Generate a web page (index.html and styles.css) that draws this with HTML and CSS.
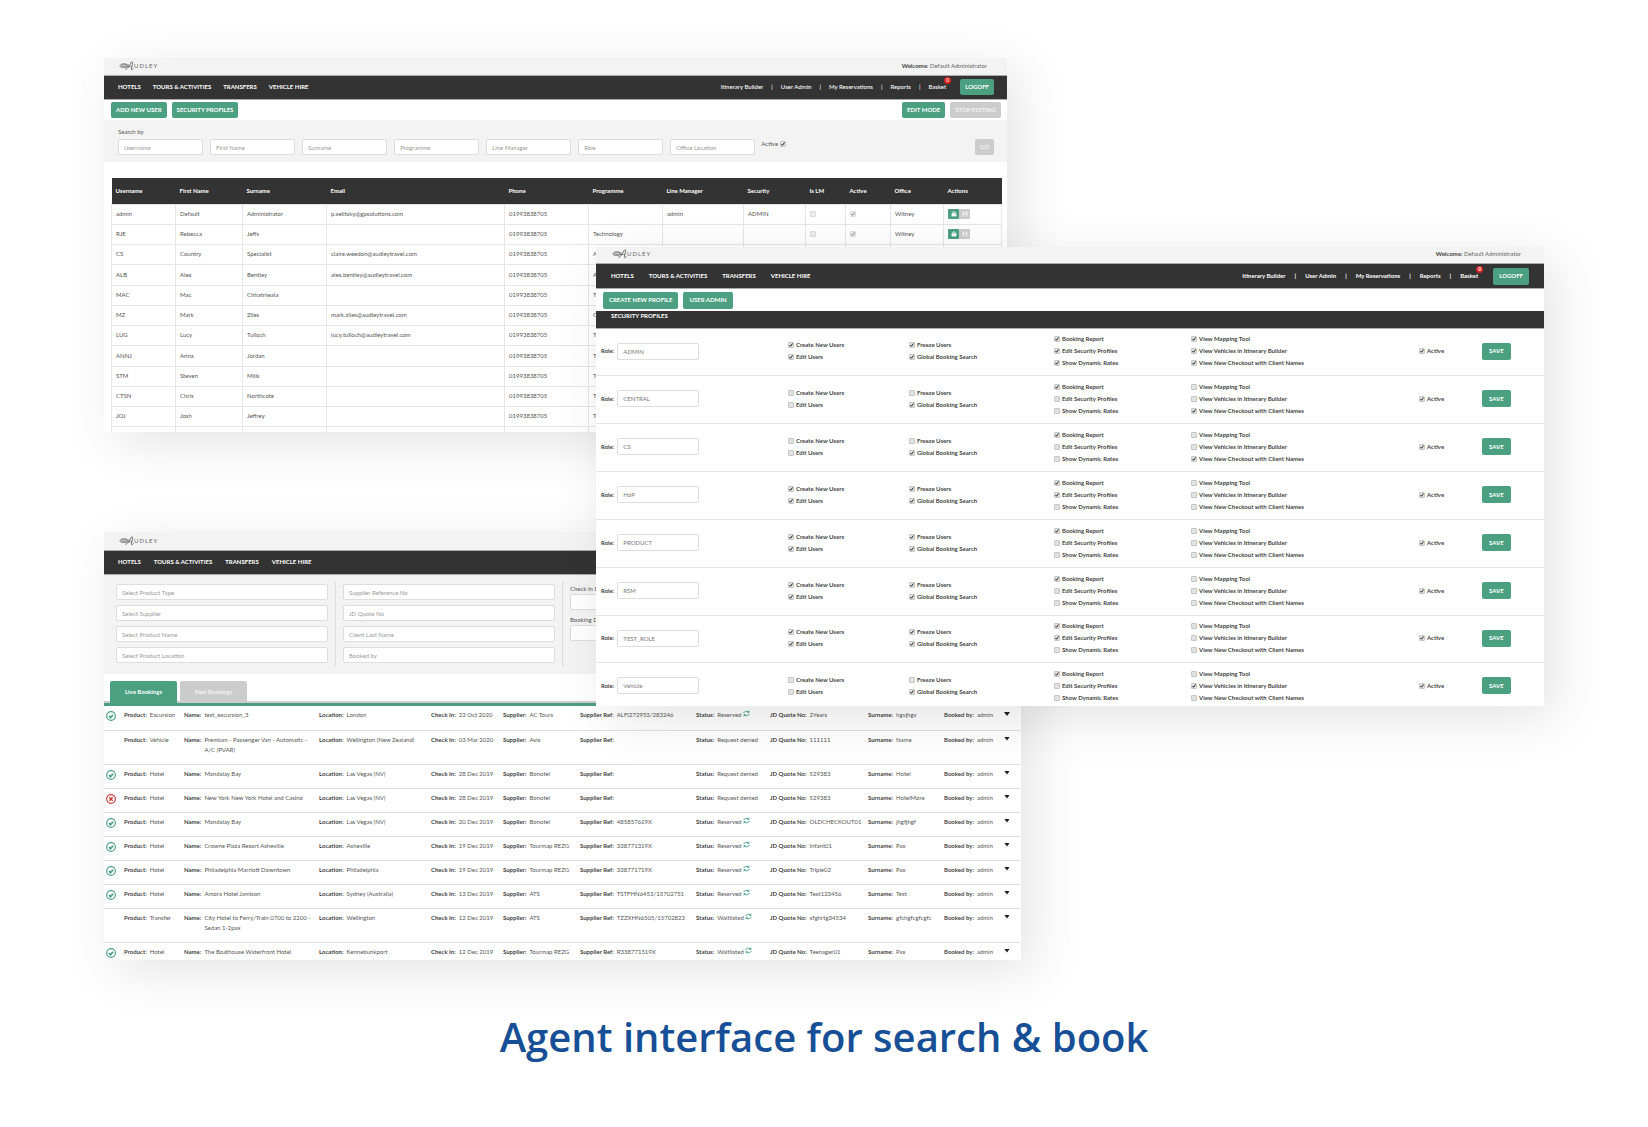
FILE: index.html
```html
<!DOCTYPE html>
<html lang="en">
<head>
<meta charset="utf-8">
<title>Agent interface for search &amp; book</title>
<link rel="stylesheet" href="styles.css">
</head>
<body>
<svg class="sprite" aria-hidden="true">
  <symbol id="swirl" viewBox="0 0 45 30"><g fill="none" stroke="#555" stroke-linecap="round"><path stroke-width="2" d="M30 15C20 21 4 22 3 15S20 6 24 11S14 18 8 15S16 10 29 12"/><path stroke-width="2.4" d="M20 25C27 24 32 14 36 5C38 1 42 2 41 6C39 13 37 20 37 25C38 28 41 26 43 23"/><path stroke-width="1.6" d="M24 17H39"/></g></symbol>
  <symbol id="ok" viewBox="0 0 30 30"><circle cx="15" cy="15" r="13" fill="none" stroke="#4aa081" stroke-width="3.5"/><path d="M9 15l4.500 5L21 11.500" fill="none" stroke="#4aa081" stroke-width="5"/></symbol>
  <symbol id="fail" viewBox="0 0 30 30"><circle cx="15" cy="15" r="13" fill="none" stroke="#d03a35" stroke-width="3.500"/><path d="M10 10l10 10M20 10L10 20" fill="none" stroke="#d03a35" stroke-width="4"/></symbol>
  <symbol id="sync" viewBox="0 0 20 20"><path d="M2 9A8 7 0 0 1 15 5M18 11A8 7 0 0 1 5 15" fill="none" stroke="#4aa081" stroke-width="2.600"/><path d="M18 1v7h-7zM2 19v-7h7z" fill="#4aa081"/></symbol>
  <symbol id="lock" viewBox="0 0 20 20"><path d="M2 8h16v10H2z" fill="#fff"/><path d="M6 9V4.500Q6 3 10 3T14 4.500V9" fill="none" stroke="#fff" stroke-width="3"/></symbol>
  <symbol id="disk" viewBox="0 0 20 20"><path d="M2 2h5v6h6V2h5v16h-4v-6H6v6H2z" fill="#f3f3f3"/></symbol>
</svg>
<main class="stage">
  <section class="window users" aria-label="User admin">
    <header class="brand">
      <a class="logo" href="#"><svg><use href="#swirl"/></svg>UDLEY</a>
      <p class="welcome"><b>Welcome:</b> Default Administrator</p>
    </header>
    <nav class="nav">
      <div class="menu"><a href="#">HOTELS</a><a href="#">TOURS &amp; ACTIVITIES</a><a href="#">TRANSFERS</a><a href="#">VEHICLE HIRE</a></div>
      <div class="account"><a href="#">Itinerary Builder</a><i>|</i><a href="#">User Admin</a><i>|</i><a href="#">My Reservations</a><i>|</i><a href="#">Reports</a><i>|</i><a class="basket" href="#">Basket<span class="badge">0</span></a><button class="btn">LOGOFF</button></div>
    </nav>
    <div class="toolbar">
      <button class="btn">ADD NEW USER</button><button class="btn">SECURITY PROFILES</button>
      <button class="btn push">EDIT MODE</button><button class="btn" disabled>STOP EDITING</button>
    </div>
    <form class="search">
      <p>Search by</p>
      <div class="search-row">
        <div class="search-fields">
          <input type="text" placeholder="Username" aria-label="Username">
          <input type="text" placeholder="First Name" aria-label="First Name">
          <input type="text" placeholder="Surname" aria-label="Surname">
          <input type="text" placeholder="Programme" aria-label="Programme">
          <input type="text" placeholder="Line Manager" aria-label="Line Manager">
          <input type="text" placeholder="Role" aria-label="Role">
          <input type="text" placeholder="Office Location" aria-label="Office Location">
        </div>
        <label class="active-filter">Active <input type="checkbox" checked></label>
        <button class="btn" disabled>GO</button>
      </div>
    </form>
    <table class="user-table">
      <colgroup><col class="w64"><col class="w67"><col class="w84"><col class="w178"><col class="w84"><col class="w74"><col class="w81"><col class="w62"><col class="w40"><col class="w45"><col class="w53"><col class="w58"></colgroup>
      <thead><tr><th>Username</th><th>First Name</th><th>Surname</th><th>Email</th><th>Phone</th><th>Programme</th><th>Line Manager</th><th>Security</th><th>Is LM</th><th>Active</th><th>Office</th><th>Actions</th></tr></thead>
      <tbody id="user-rows"></tbody>
    </table>
  </section>

  <section class="window bookings" aria-label="Bookings">
    <header class="brand">
      <a class="logo" href="#"><svg><use href="#swirl"/></svg>UDLEY</a>
    </header>
    <nav class="nav">
      <div class="menu"><a href="#">HOTELS</a><a href="#">TOURS &amp; ACTIVITIES</a><a href="#">TRANSFERS</a><a href="#">VEHICLE HIRE</a></div>
    </nav>
    <form class="filters">
      <div class="filter-group">
        <input type="text" placeholder="Select Product Type" aria-label="Product type">
        <input type="text" placeholder="Select Supplier" aria-label="Supplier">
        <input type="text" placeholder="Select Product Name" aria-label="Product name">
        <input type="text" placeholder="Select Product Location" aria-label="Product location">
      </div>
      <div class="filter-group">
        <input type="text" placeholder="Supplier Reference No" aria-label="Supplier reference">
        <input type="text" placeholder="JD Quote No" aria-label="Quote number">
        <input type="text" placeholder="Client Last Name" aria-label="Client last name">
        <input type="text" placeholder="Booked by" aria-label="Booked by">
      </div>
      <div class="filter-dates">
        <label for="checkin">Check In Date</label><input id="checkin" type="text">
        <label for="booked">Booking Date</label><input id="booked" type="text">
      </div>
    </form>
    <div class="tabs"><button class="tab current">Live Bookings</button><button class="tab">Past Bookings</button></div>
    <table class="booking-table">
      <colgroup><col class="w20"><col class="w60"><col class="w135"><col class="w112"><col class="w72"><col class="w77"><col class="w116"><col class="w74"><col class="w98"><col class="w76"><col class="w60"><col class="w18"></colgroup>
      <tbody id="booking-rows"></tbody>
    </table>
  </section>

  <section class="window profiles" aria-label="Security profiles">
    <header class="brand">
      <a class="logo" href="#"><svg><use href="#swirl"/></svg>UDLEY</a>
      <p class="welcome"><b>Welcome:</b> Default Administrator</p>
    </header>
    <nav class="nav">
      <div class="menu"><a href="#">HOTELS</a><a href="#">TOURS &amp; ACTIVITIES</a><a href="#">TRANSFERS</a><a href="#">VEHICLE HIRE</a></div>
      <div class="account"><a href="#">Itinerary Builder</a><i>|</i><a href="#">User Admin</a><i>|</i><a href="#">My Reservations</a><i>|</i><a href="#">Reports</a><i>|</i><a class="basket" href="#">Basket<span class="badge">0</span></a><button class="btn">LOGOFF</button></div>
    </nav>
    <div class="toolbar"><button class="btn">CREATE NEW PROFILE</button><button class="btn">USER ADMIN</button></div>
    <h2 class="band">SECURITY PROFILES</h2>
    <div id="profile-rows"></div>
  </section>

  <h1 class="caption">Agent interface for search &amp; book</h1>
</main>
<script src="app.js"></script>
</body>
</html>
```
FILE: styles.css
```css
* { box-sizing: border-box; }
body { margin: 0; background: #fff; color: #555; font: 6px/10px Lato, "Liberation Sans", sans-serif; }
p, h1, h2 { margin: 0; }
a { color: inherit; text-decoration: none; }
b { color: #444; }
.sprite { display: none; }
input, button { font: inherit; margin: 0; }

.stage {
  display: grid;
  grid-template-columns: 104fr 492fr 411fr 14fr 523fr 104fr;
  grid-template-rows: 58px 189px 185px 100px 174px 254px 167px;
}
.window { isolation: isolate; background: #fff; min-width: 0; min-height: 0; overflow: hidden; box-shadow: 12px 12px 50px rgba(0, 0, 0, 0.11); }
.users { grid-column: 2 / 4; grid-row: 2 / 4; }
.bookings { grid-column: 2 / 5; grid-row: 5 / 7; }
.profiles { grid-column: 3 / 6; grid-row: 3 / 6; z-index: 1; }

.brand { display: flex; justify-content: space-between; align-items: center; height: 17px; padding: 0 20px 1px 15px; background: #f3f3f3; }
.bookings .brand { height: 18px; }
.profiles .brand { height: 16px; padding: 0 23px 3px 16px; }
.logo { display: flex; align-items: center; color: #666; letter-spacing: 1px; }
.logo svg { width: 15px; height: 10px; }
.welcome { color: #666; }

.nav { display: flex; justify-content: space-between; align-items: center; height: 25px; padding: 0 13px 1px 14px; background: #333; border-top: 1px solid #aaa; border-bottom: 1px solid #aaa; color: #fff; font-weight: 700; }
.profiles .nav { height: 26px; padding: 0 15px; }
.menu { display: flex; gap: 12px; }
.bookings .menu { gap: 13px; }
.profiles .menu { gap: 15px; }
.account { display: flex; align-items: center; gap: 8px; font-weight: 500; }
.profiles .account { gap: 9px; font-weight: 700; }
.account i { font-style: normal; }
.account .btn { margin-left: 6px; }
.basket { position: relative; }
.badge { position: absolute; left: 100%; top: -5px; margin-left: -2px; width: 7px; height: 7px; border-radius: 50%; background: #d22; color: #fff; font-size: 5px; line-height: 7px; text-align: center; }

.btn { height: 16px; padding: 0 5px; border: 0; border-radius: 2px; background: #4aa081; color: #fff; font-weight: 700; line-height: 16px; white-space: nowrap; }
.btn:disabled { background: #ccc; color: #f3f3f3; }
.toolbar { display: flex; align-items: center; gap: 5px; height: 20px; padding: 0 6px 0 7px; }
.toolbar .push { margin-left: auto; }
.profiles .toolbar { height: 22px; }
.profiles .btn { height: 17px; padding: 0 6px; }

input[type="text"] { width: 100%; height: 16px; padding: 0 5px; border: 1px solid #ddd; border-radius: 2px; background: #fff; color: #777; }
input::placeholder { color: #999; opacity: 1; }
input[type="checkbox"] { appearance: none; flex: none; width: 6px; height: 6px; border: 1px solid #c6c6c6; border-radius: 1px; background: #e2e2e2; }
input[type="checkbox"]:checked { background: #e2e2e2 url("data:image/svg+xml,%3Csvg xmlns='http://www.w3.org/2000/svg' viewBox='0 0 8 8'%3E%3Cpath d='M1 4l2 2.500L7 1' fill='none' stroke='%23222' stroke-width='2'/%3E%3C/svg%3E"); }
input[type="checkbox"]:disabled { opacity: 0.6; }

.search { height: 42px; padding: 7px 13px 0 14px; background: #f3f3f3; }
.search-row { display: flex; margin-top: 2px; }
.search-fields { display: grid; flex: 636 1 0; grid-template-columns: repeat(7, 1fr); gap: 7px; }
.active-filter { display: flex; flex: 213 1 0; gap: 2px; align-items: center; height: 10px; padding-left: 6px; }

table { border-collapse: collapse; table-layout: fixed; }
.w18 { width: 18px; }
.w20 { width: 20px; }
.w40 { width: 40px; }
.w45 { width: 45px; }
.w53 { width: 53px; }
.w58 { width: 58px; }
.w60 { width: 60px; }
.w62 { width: 62px; }
.w64 { width: 64px; }
.w67 { width: 67px; }
.w72 { width: 72px; }
.w74 { width: 74px; }
.w76 { width: 76px; }
.w77 { width: 77px; }
.w81 { width: 81px; }
.w84 { width: 84px; }
.w98 { width: 98px; }
.w112 { width: 112px; }
.w116 { width: 116px; }
.w135 { width: 135px; }
.w178 { width: 178px; }
.user-table { width: calc(100% - 13px); margin: 16px 6px 0 7px; }
.user-table th { height: 26px; padding: 0 4px; background: #333; color: #fff; text-align: left; }
.user-table td { height: 20px; padding: 0 4px; border: 1px solid #e6e6e6; }
.user-table tr:nth-child(4n) td { height: 21px; }
.user-table input { display: block; }
.actions { display: flex; }
.icon-btn { display: grid; place-items: center; width: 11px; height: 10px; padding: 0; border: 0; border-radius: 1px; background: #4aa081; }
.icon-btn:disabled { background: #ccc; }
.icon-btn svg { width: 6px; height: 6px; }

.band { height: 18px; padding-left: 15px; background: #333; border-bottom: 1px solid #aaa; color: #fff; font-size: 6px; line-height: 10px; }
.profile { display: grid; grid-template-columns: 187fr 121fr 145fr 137fr 228fr 63fr 62fr; align-items: center; height: 48px; padding: 0 0 2px 5px; border-bottom: 1px solid #e4e4e4; color: #444; font-weight: 700; }
.profile:nth-child(6n + 1) { height: 47px; }
.profile input[type="text"] { width: 82px; height: 17px; font-weight: 400; }
.role { display: flex; align-items: center; gap: 3px; }
.checks label { display: flex; align-items: center; gap: 2px; height: 12px; white-space: nowrap; }
.profile .btn { justify-self: start; padding: 0 7px; }

.filters { display: flex; height: 99px; padding: 7px 13px 7px 12px; background: #f3f3f3; }
.filter-group { display: flex; flex: 212 1 0; flex-direction: column; gap: 5px; height: 84px; padding: 2px 7px 0 0; margin-right: 7px; border-right: 1px solid #ddd; }
.filter-dates { flex: 438 1 0; padding-top: 2px; }
.filter-dates label { display: block; }
.filter-dates input { margin-bottom: 5px; }
.tabs { display: flex; gap: 3px; height: 32px; padding: 7px 6px 0; border-bottom: 3px solid #4aa081; background: linear-gradient(#ccc, #ccc) bottom / 100% 2px no-repeat; }
.tab { width: 67px; border: 0; border-radius: 2px 2px 0 0; background: #ccc; color: #f3f3f3; font-weight: 700; }
.tab.current { background: #4aa081; color: #fff; }

.booking-table { width: 100%; }
.booking-table td { height: 24px; padding: 4px 0 0; border-bottom: 1px solid #e0e0e0; vertical-align: top; white-space: nowrap; }
.booking-table tr.tall td { height: 34px; }
.booking-table .field { display: flex; gap: 3px; }
.booking-table .name { padding-right: 4px; white-space: normal; }
.state { display: block; width: 10px; height: 10px; margin: 1px 0 0 2px; }
.sync { width: 7px; height: 7px; }
.toggle { display: block; width: 6px; height: 4px; margin-top: 2px; padding: 0; border: 0; background: #222; clip-path: polygon(0 0, 100% 0, 50% 100%); }

.caption { grid-column: 1 / -1; grid-row: 7; padding-top: 50px; color: #174f96; font: 600 40px/54px "Open Sans", "Noto Sans", sans-serif; text-align: center; }
```
FILE: app.js
```js
const users = [
  ["admin", "Default", "Administrator", "p.selitsky@gpsolutions.com", "", "admin", "ADMIN"],
  ["RJE", "Rebecca", "Jeffs", "", "Technology", "", ""],
  ["CS", "Country", "Specialist", "claire.weedon@audleytravel.com", "Africa", "", ""],
  ["ALB", "Alex", "Bentley", "alex.bentley@audleytravel.com", "Africa", "", ""],
  ["MAC", "Mac", "Chhatriwala", "", "Technology", "", ""],
  ["MZ", "Mark", "Ziles", "mark.ziles@audleytravel.com", "Central", "", ""],
  ["LUG", "Lucy", "Tulloch", "lucy.tulloch@audleytravel.com", "Technology", "", ""],
  ["ANNJ", "Anna", "Jordan", "", "Technology", "", ""],
  ["STM", "Steven", "Mills", "", "Technology", "", ""],
  ["CTSN", "Chris", "Northcote", "", "Technology", "", ""],
  ["JOJ", "Josh", "Jeffrey", "", "Technology", "", ""],
];
document.getElementById("user-rows").innerHTML = users.map(([id, first, last, mail, prog, manager, security]) => `
  <tr><td>${id}</td><td>${first}</td><td>${last}</td><td>${mail}</td><td>01993838705</td><td>${prog}</td><td>${manager}</td><td>${security}</td>
  <td><input type="checkbox" disabled aria-label="Is line manager"></td><td><input type="checkbox" checked disabled aria-label="Active"></td><td>Witney</td>
  <td><div class="actions"><button class="icon-btn" aria-label="Lock"><svg><use href="#lock"/></svg></button><button class="icon-btn" disabled aria-label="Save"><svg><use href="#disk"/></svg></button></div></td></tr>`).join("") + `<tr>${"<td></td>".repeat(12)}</tr>`;

const groups = [
  ["Create New Users", "Edit Users"],
  ["Freeze Users", "Global Booking Search"],
  ["Booking Report", "Edit Security Profiles", "Show Dynamic Rates"],
  ["View Mapping Tool", "View Vehicles in Itinerary Builder", "View New Checkout with Client Names"],
  ["Active"],
];
const profiles = [
  ["ADMIN", "11 11 111 111 1"],
  ["CENTRAL", "00 01 100 001 1"],
  ["CS", "00 01 100 001 1"],
  ["HoP", "11 11 110 000 1"],
  ["PRODUCT", "11 11 100 000 1"],
  ["RSM", "11 11 100 000 1"],
  ["TEST_ROLE", "11 11 110 000 1"],
  ["Vehicle", "00 01 100 010 1"],
];
document.getElementById("profile-rows").innerHTML = profiles.map(([role, flags]) => {
  const sets = flags.split(" ");
  const checks = groups.map((labels, g) => `<div class="checks">${labels.map((text, i) =>
    `<label><input type="checkbox"${sets[g][i] === "1" ? " checked" : ""}>${text}</label>`).join("")}</div>`).join("");
  return `<form class="profile"><label class="role">Role: <input type="text" value="${role}"></label>${checks}<button type="button" class="btn">SAVE</button></form>`;
}).join("");

const bookings = [
  ["ok", "Excursion", "test_excursion_3", "London", "23 Oct 2020", "AC Tours", "ALFI272953/283246", "Reserved", "2Years", "hgvjhgv"],
  ["", "Vehicle", "Premium - Passenger Van - Automatic - A/C (PVAR)", "Wellington (New Zealand)", "03 Mar 2020", "Avis", "", "Request denied", "111111", "Name"],
  ["ok", "Hotel", "Mandalay Bay", "Las Vegas (NV)", "28 Dec 2019", "Bonotel", "", "Request denied", "529383", "Hotel"],
  ["fail", "Hotel", "New York New York Hotel and Casino", "Las Vegas (NV)", "28 Dec 2019", "Bonotel", "", "Request denied", "529383", "HotelMore"],
  ["ok", "Hotel", "Mandalay Bay", "Las Vegas (NV)", "20 Dec 2019", "Bonotel", "485857619X", "Reserved", "OLDCHECKOUT01", "jhgfjhgf"],
  ["ok", "Hotel", "Crowne Plaza Resort Asheville", "Asheville", "19 Dec 2019", "Tourmap REZG", "338771319X", "Reserved", "Infant01", "Pax"],
  ["ok", "Hotel", "Philadelphia Marriott Downtown", "Philadelphia", "19 Dec 2019", "Tourmap REZG", "338771719X", "Reserved", "Triple02", "Pax"],
  ["ok", "Hotel", "Amora Hotel Jamison", "Sydney (Australia)", "13 Dec 2019", "ATS", "TSTFHN6453/15702751", "Reserved", "Text123456", "Test"],
  ["", "Transfer", "City Hotel to Ferry/Train 0700 to 2200 - Sedan 1-2pax", "Wellington", "12 Dec 2019", "ATS", "TZZXHN6505/15702823", "Waitlisted", "xfghrtg34534", "gfchgfcgfcgfc"],
  ["ok", "Hotel", "The Boathouse Waterfront Hotel", "Kennebunkport", "12 Dec 2019", "Tourmap REZG", "R338771519X", "Waitlisted", "Teenager01", "Pax"],
];
const names = ["Product", "Name", "Location", "Check In", "Supplier", "Supplier Ref", "Status", "JD Quote No", "Surname", "Booked by"];
document.getElementById("booking-rows").innerHTML = bookings.map(([state, ...values]) => {
  const cells = [...values, "admin"].map((value, i) => {
    const sync = i === 6 && value !== "Request denied" ? '<svg class="sync"><use href="#sync"/></svg>' : "";
    return `<td><div class="field${i === 1 ? " name" : ""}"><b>${names[i]}:</b><span>${value} ${sync}</span></div></td>`;
  }).join("");
  const icon = state ? `<svg class="state"><use href="#${state}"/></svg>` : "";
  return `<tr${state ? "" : ' class="tall"'}><td>${icon}</td>${cells}<td><button class="toggle" aria-label="Show details"></button></td></tr>`;
}).join("");
```
